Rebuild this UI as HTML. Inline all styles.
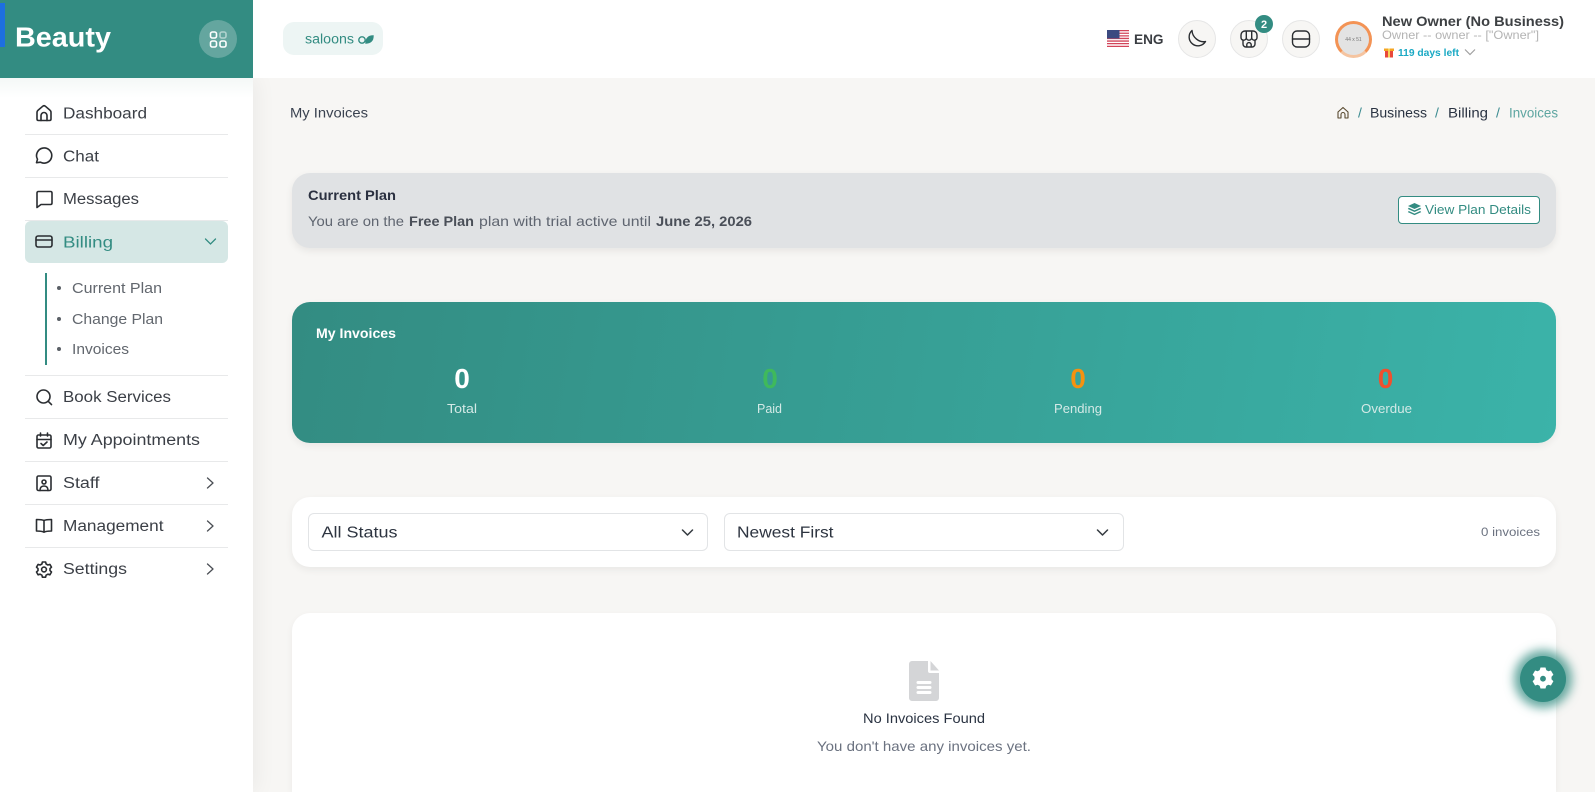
<!DOCTYPE html>
<html lang="en"><head><meta charset="utf-8"><title>My Invoices</title>
<style>
html,body{margin:0;padding:0;width:1595px;height:792px;overflow:hidden;background:#f7f6f4;font-family:"Liberation Sans",sans-serif}
body{position:relative}
.b{position:absolute;box-sizing:border-box}
svg{position:absolute;left:0;top:0}
text{font-family:"Liberation Sans",sans-serif}
.n{font-size:15.5px;fill:#3b3f46;letter-spacing:0}
.s{font-size:14px;fill:#5f6570}
.i{fill:none;stroke:#2a2d31;stroke-width:1.6;stroke-linecap:round;stroke-linejoin:round}
.c{fill:none;stroke:#4a4e54;stroke-width:1.3;stroke-linecap:round;stroke-linejoin:round}
.d{position:absolute;left:25px;width:203px;height:1px;background:#e8e9ea}
</style></head><body>
<div class="b" style="left:0;top:78px;width:253px;height:714px;background:#fff;box-shadow:4px 0 20px rgba(0,0,0,.05)"></div>
<div class="b" style="left:0;top:78px;width:253px;height:20px;background:linear-gradient(#f4f8f7,#fff)"></div>
<div class="b" style="left:253px;top:0;width:1342px;height:78px;background:#fff"></div>
<div class="b" style="left:0;top:0;width:253px;height:78px;background:#338c82"></div>
<div class="b" style="left:0;top:3px;width:5px;height:44px;background:#1d6fe0"></div>
<div class="b" style="left:199px;top:20px;width:38px;height:38px;border-radius:50%;background:#64a69f"></div>
<div class="b" style="left:283px;top:22px;width:100px;height:33px;border-radius:11px;background:#edf5f4"></div>
<div class="d" style="top:134px"></div><div class="d" style="top:177px"></div><div class="d" style="top:220px"></div>
<div class="b" style="left:25px;top:221px;width:203px;height:42px;border-radius:6px;background:#d5e7e5"></div>
<div class="b" style="left:45px;top:273px;width:2px;height:92px;background:#338c82"></div>
<div class="d" style="top:375px"></div><div class="d" style="top:418px"></div><div class="d" style="top:461px"></div><div class="d" style="top:504px"></div><div class="d" style="top:547px"></div>
<div class="b" style="left:1178px;top:20px;width:38px;height:38px;border-radius:50%;background:#f7f6f4;border:1px solid #e6e6e6"></div>
<div class="b" style="left:1230px;top:20px;width:38px;height:38px;border-radius:50%;background:#f7f6f4;border:1px solid #e6e6e6"></div>
<div class="b" style="left:1282px;top:20px;width:38px;height:38px;border-radius:50%;background:#f7f6f4;border:1px solid #e6e6e6"></div>
<div class="b" style="left:1255px;top:15px;width:18px;height:18px;border-radius:50%;background:#338c82"></div>
<div class="b" style="left:1335px;top:21px;width:37px;height:37px;border-radius:50%;background:#e3e3e3;border:3px solid #f39355;border-bottom-color:#f5c4a0"></div>
<div class="b" style="left:292px;top:173px;width:1264px;height:75px;border-radius:18px;background:#e0e2e4;box-shadow:0 3px 8px rgba(0,0,0,.07)"></div>
<div class="b" style="left:1398px;top:196px;width:142px;height:28px;border-radius:4px;background:#fff;border:1px solid #338c82"></div>
<div class="b" style="left:292px;top:302px;width:1264px;height:141px;border-radius:18px;background:linear-gradient(100deg,#338c82,#3bb3a9);box-shadow:0 3px 8px rgba(0,0,0,.06)"></div>
<div class="b" style="left:292px;top:497px;width:1264px;height:70px;border-radius:18px;background:#fff;box-shadow:0 3px 8px rgba(0,0,0,.06)"></div>
<div class="b" style="left:308px;top:513px;width:400px;height:38px;border-radius:6px;background:#fff;border:1px solid #e2e4e6"></div>
<div class="b" style="left:724px;top:513px;width:400px;height:38px;border-radius:6px;background:#fff;border:1px solid #e2e4e6"></div>
<div class="b" style="left:292px;top:613px;width:1264px;height:179px;border-radius:18px 18px 0 0;background:#fff;box-shadow:0 3px 8px rgba(0,0,0,.05)"></div>
<div class="b" style="left:1520px;top:656px;width:46px;height:46px;border-radius:50%;background:#338c82;box-shadow:0 0 10px 6px rgba(51,140,130,.75)"></div>

<svg width="1595" height="792" viewBox="0 0 1595 792" xmlns="http://www.w3.org/2000/svg">
<text x="15" y="46.500" font-size="28" font-weight="700" fill="#fff" textLength="96" lengthAdjust="spacingAndGlyphs">Beauty</text>
<g fill="none" stroke="#fff" stroke-width="1.600">
<rect x="210.500" y="32" width="6" height="6" rx="1.800"/><rect x="220" y="32" width="6" height="6" rx="1.800" opacity=".5"/><rect x="210.500" y="41" width="6" height="6" rx="1.800"/><rect x="220" y="41" width="6" height="6" rx="1.800"/></g>
<text x="305" y="43.500" font-size="13.500" fill="#338c82" textLength="49" lengthAdjust="spacingAndGlyphs">saloons</text>
<g fill="none" stroke="#338c82" stroke-width="1.400"><circle cx="362" cy="40" r="3.200"/><path d="M373 36c-4.500 0-7 2.500-7 7 4.500 0 7-2.500 7-7z" fill="#338c82"/></g>

<!-- sidebar icons -->
<path class="i" d="M37 119v-6.500c0-1 .4-1.800 1.200-2.400l4.600-3.900a2 2 0 0 1 2.500 0l4.600 3.900c.8.600 1.100 1.400 1.100 2.400v6.500c0 .9-.6 1.500-1.500 1.500H38.500c-.9 0-1.500-.6-1.500-1.500z"/>
<path class="i" d="M41 120.500v-5a3 3 0 0 1 6 0v5"/>
<path class="i" d="M36.500 162.700l1-3.500a7.600 7.600 0 1 1 3 3l-4 .5z"/>
<path class="i" d="M37 193c0-1 .6-1.500 1.500-1.500h12c.9 0 1.500.6 1.500 1.500v10c0 .9-.6 1.500-1.500 1.500H41l-4 3V193z"/>
<rect class="i" x="36" y="236" width="16" height="11" rx="2"/><path class="i" d="M36 240h16"/>
<circle class="i" cx="43.500" cy="396.500" r="6.500"/><path class="i" d="M48.200 401.300l3.300 3.300"/>
<rect class="i" x="37" y="435" width="14" height="13" rx="1.500"/><path class="i" d="M37 439.500h14M40.500 433v3M47.500 433v3M41 443.500l2.200 2 3.800-3.500"/>
<rect class="i" x="37" y="476" width="14" height="14.500" rx="1.500"/><circle class="i" cx="44" cy="482" r="2"/><path class="i" d="M40 490.500c0-3 1.500-4.500 4-4.500s4 1.500 4 4.500"/>
<path class="i" d="M44 520.500c-2-1-4-1-7.500-1V531c3.500 0 5.500 0 7.500 1.200 2-1.200 4-1.200 7.500-1.200v-11.500c-3.500 0-5.500 0-7.500 1zM44 520.500v11.700"/>
<circle class="i" cx="44" cy="569.500" r="2.400"/>
<path class="i" d="M42.400 562h3.200l.5 2 1.800 1 2-.6 1.600 2.800-1.500 1.400v2l1.500 1.400-1.600 2.800-2-.6-1.800 1-.5 2h-3.200l-.5-2-1.800-1-2 .6-1.600-2.800 1.500-1.400v-2l-1.500-1.400 1.600-2.800 2 .6 1.800-1z"/>

<!-- sidebar text -->
<text class="n" x="63" y="118.500" textLength="84" lengthAdjust="spacingAndGlyphs">Dashboard</text>
<text class="n" x="63" y="161.500" textLength="36" lengthAdjust="spacingAndGlyphs">Chat</text>
<text class="n" x="63" y="204" textLength="76" lengthAdjust="spacingAndGlyphs">Messages</text>
<text class="n" x="63" y="247.500" style="fill:#338c82" textLength="50" lengthAdjust="spacingAndGlyphs">Billing</text>
<path fill="none" stroke="#338c82" stroke-width="1.300" stroke-linecap="round" d="M205.500 239l5 5 5-5"/>
<circle cx="59" cy="288" r="2" fill="#5a5f66"/><circle cx="59" cy="319" r="2" fill="#5a5f66"/><circle cx="59" cy="349" r="2" fill="#5a5f66"/>
<text x="72" y="293" font-size="14.500" fill="#62676e" textLength="90" lengthAdjust="spacingAndGlyphs">Current Plan</text>
<text x="72" y="324" font-size="14.500" fill="#62676e" textLength="91" lengthAdjust="spacingAndGlyphs">Change Plan</text>
<text x="72" y="354" font-size="14.500" fill="#62676e" textLength="57" lengthAdjust="spacingAndGlyphs">Invoices</text>
<text class="n" x="63" y="402" textLength="108" lengthAdjust="spacingAndGlyphs">Book Services</text>
<text class="n" x="63" y="445" textLength="137" lengthAdjust="spacingAndGlyphs">My Appointments</text>
<text class="n" x="63" y="488" textLength="36.500" lengthAdjust="spacingAndGlyphs">Staff</text>
<text class="n" x="63" y="531" textLength="100.500" lengthAdjust="spacingAndGlyphs">Management</text>
<text class="n" x="63" y="574" textLength="64" lengthAdjust="spacingAndGlyphs">Settings</text>
<path class="c" d="M207.500 478l5.500 5-5.500 5M207.500 521l5.500 5-5.500 5M207.500 564l5.500 5-5.500 5"/>

<!-- header right -->
<rect x="1107" y="30" width="22" height="17" fill="#fff"/>
<path d="M1107 30h22v1.300h-22zM1107 32.600h22v1.300h-22zM1107 35.200h22v1.300h-22zM1107 37.800h22v1.300h-22zM1107 40.400h22v1.300h-22zM1107 43h22v1.300h-22zM1107 45.700h22V47h-22z" fill="#d2455a"/>
<rect x="1107" y="30" width="12.500" height="8.500" fill="#3b4a80"/>
<text x="1134" y="44" font-size="14" font-weight="700" fill="#3a3d42" textLength="29.500" lengthAdjust="spacingAndGlyphs">ENG</text>
<path class="i" d="M1192 30.500a8.800 8.800 0 1 0 13.500 11c-6.400 1.400-13.200-4.200-13.500-11z" style="stroke-width:1.400"/>
<path class="i" d="M1245 31h8a4 4 0 0 1 4 4v2.500a2.700 2.700 0 0 1-2 2.600V44a3 3 0 0 1-3 3h-6a3 3 0 0 1-3-3v-3.900a2.700 2.700 0 0 1-2-2.600V35a4 4 0 0 1 4-4zM1246.300 31v6.500a2.650 2.650 0 0 1-5.300 0M1246.300 37.500a2.700 2.700 0 0 0 5.400 0M1251.700 31v6.500a2.650 2.650 0 0 0 5.300 0M1246.800 47v-2.200a2.200 2.200 0 0 1 4.400 0V47" style="stroke-width:1.400"/>
<text x="1264" y="28" font-size="11" font-weight="700" fill="#fff" text-anchor="middle">2</text>
<rect class="i" x="1292.500" y="31" width="17" height="16" rx="4.500" style="stroke-width:1.400"/><path class="i" d="M1292.500 39h17" style="stroke-width:1.500"/>
<text x="1353.500" y="41" font-size="5" fill="#777" text-anchor="middle">44 x 51</text>
<text x="1382" y="26" font-size="14" font-weight="700" fill="#3d4043" textLength="182" lengthAdjust="spacingAndGlyphs">New Owner (No Business)</text>
<text x="1382" y="39" font-size="12" fill="#b4b4b4" textLength="157" lengthAdjust="spacingAndGlyphs">Owner -- owner -- ["Owner"]</text>
<rect x="1385" y="50" width="8" height="7.500" fill="#e8483a"/><rect x="1384" y="48.500" width="10" height="2.500" fill="#f5a623"/><rect x="1388" y="48.500" width="2" height="9" fill="#f8d25a"/>
<text x="1398" y="56" font-size="10.500" font-weight="700" fill="#1aa9c4" textLength="61" lengthAdjust="spacingAndGlyphs">119 days left</text>
<path fill="none" stroke="#a0a0a0" stroke-width="1.200" d="M1465 49.500l5 5 5-5"/>

<!-- breadcrumb -->
<text x="290" y="117.500" font-size="13.500" fill="#3a4250" textLength="78" lengthAdjust="spacingAndGlyphs">My Invoices</text>
<path fill="none" stroke="#5a4a30" stroke-width="1.100" stroke-linejoin="round" d="M1338 118v-6l5-4.500 5 4.500v6h-3v-3.500a2 2 0 0 0-4 0v3.500z"/>
<text x="1358" y="117.500" font-size="14" fill="#3a8a90">/</text>
<text x="1370" y="117.500" font-size="13.500" fill="#2a3342" textLength="57" lengthAdjust="spacingAndGlyphs">Business</text>
<text x="1435" y="117.500" font-size="14" fill="#3a8a90">/</text>
<text x="1448" y="117.500" font-size="13.500" fill="#2a3342" textLength="40" lengthAdjust="spacingAndGlyphs">Billing</text>
<text x="1496" y="117.500" font-size="14" fill="#3a8a90">/</text>
<text x="1509" y="117.500" font-size="13.500" fill="#5da5a0" textLength="49" lengthAdjust="spacingAndGlyphs">Invoices</text>

<!-- current plan -->
<text x="308" y="200" font-size="14" font-weight="700" fill="#2a3040" textLength="88" lengthAdjust="spacingAndGlyphs">Current Plan</text>
<text class="s" x="308" y="226" textLength="96" lengthAdjust="spacingAndGlyphs">You are on the</text>
<text class="s" x="409" y="226" font-weight="700" style="fill:#4a4f58" textLength="65" lengthAdjust="spacingAndGlyphs">Free Plan</text>
<text class="s" x="479" y="226" textLength="172" lengthAdjust="spacingAndGlyphs">plan with trial active until</text>
<text class="s" x="656" y="226" font-weight="700" style="fill:#4a4f58" textLength="96" lengthAdjust="spacingAndGlyphs">June 25, 2026</text>
<g fill="#338c82"><path d="M1414.500 203l6.500 3-6.500 3-6.500-3z"/><path d="M1408.800 207.800l5.700 2.600 5.700-2.600 1 1.200-6.700 3-6.700-3z"/><path d="M1408.800 211l5.700 2.600 5.700-2.600 1 1.100-6.700 3-6.700-3z"/></g>
<text x="1425" y="214" font-size="12.500" fill="#338c82" textLength="106" lengthAdjust="spacingAndGlyphs">View Plan Details</text>

<!-- stats -->
<text x="316" y="338" font-size="14" font-weight="700" fill="#fff" textLength="80" lengthAdjust="spacingAndGlyphs">My Invoices</text>
<g font-size="28" font-weight="700" text-anchor="middle">
<text x="462" y="388" fill="#fff">0</text><text x="770" y="388" fill="#3fb95c">0</text><text x="1078" y="388" fill="#f5920f">0</text><text x="1385.500" y="388" fill="#f0502e">0</text></g>
<g font-size="12.500" fill="#d3e9e6">
<text x="447" y="413" textLength="30" lengthAdjust="spacingAndGlyphs">Total</text>
<text x="757" y="413" textLength="25" lengthAdjust="spacingAndGlyphs">Paid</text>
<text x="1054" y="413" textLength="48" lengthAdjust="spacingAndGlyphs">Pending</text>
<text x="1361" y="413" textLength="51" lengthAdjust="spacingAndGlyphs">Overdue</text></g>

<!-- filters -->
<text x="321.500" y="537.500" font-size="15.500" fill="#2d3440" textLength="76" lengthAdjust="spacingAndGlyphs">All Status</text>
<text x="737" y="537.500" font-size="15.500" fill="#2d3440" textLength="96.500" lengthAdjust="spacingAndGlyphs">Newest First</text>
<path fill="none" stroke="#343a40" stroke-width="1.500" stroke-linecap="round" stroke-linejoin="round" d="M682.500 530l5 5 5-5M1097.500 530l5 5 5-5"/>
<text x="1481" y="536" font-size="11.500" fill="#6b7280" textLength="59" lengthAdjust="spacingAndGlyphs">0 invoices</text>

<!-- empty -->
<path fill="#d4d5d7" d="M912 661h16v10a2 2 0 0 0 2 2h9v25a3 3 0 0 1-3 3h-24a3 3 0 0 1-3-3v-34a3 3 0 0 1 3-3z"/>
<path fill="#d4d5d7" d="M930.500 661l8.500 9.500h-8.500z"/>
<rect x="916.500" y="681" width="15" height="3" rx="1.500" fill="#fff"/><rect x="916.500" y="686" width="15" height="3" rx="1.500" fill="#fff"/><rect x="916.500" y="691" width="15" height="3" rx="1.500" fill="#fff"/>
<text x="863" y="723" font-size="14" fill="#2a3342" textLength="122" lengthAdjust="spacingAndGlyphs">No Invoices Found</text>
<text x="817" y="751" font-size="14" fill="#6b7280" textLength="214" lengthAdjust="spacingAndGlyphs">You don't have any invoices yet.</text>

<!-- fab gear -->
<path fill="#fff" fill-rule="evenodd" d="M1540.500 667.500h5l.8 2.600 2 1.100 2.600-.7 2.500 4.300-1.900 2v2.400l1.900 2-2.500 4.300-2.600-.7-2 1.100-.8 2.600h-5l-.8-2.600-2-1.100-2.600.7-2.500-4.300 1.900-2v-2.400l-1.900-2 2.500-4.300 2.600.7 2-1.100zM1543 675.800a2.900 2.900 0 1 0 0 5.800 2.900 2.900 0 0 0 0-5.800z"/>
</svg>
</body></html>
